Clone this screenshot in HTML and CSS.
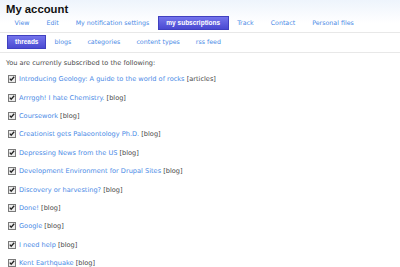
FILE: index.html
```html
<!DOCTYPE html>
<html lang="en">
<head>
  <meta charset="UTF-8">
  <title>My account</title>
  <link rel="stylesheet" href="styles.css">
</head>
<body>
  <div class="header">
    <h1>My account</h1>
    <ul class="tabs primary">
      <li><a href="#">View</a></li>
      <li><a href="#">Edit</a></li>
      <li><a href="#">My notification settings</a></li>
      <li class="active"><a href="#">my subscriptions</a></li>
      <li><a href="#">Track</a></li>
      <li><a href="#">Contact</a></li>
      <li><a href="#">Personal files</a></li>
    </ul>
  </div>
  <ul class="tabs secondary">
    <li class="active"><a href="#">threads</a></li>
    <li><a href="#">blogs</a></li>
    <li><a href="#">categories</a></li>
    <li><a href="#">content types</a></li>
    <li><a href="#">rss feed</a></li>
  </ul>

  <div class="content">
    <p class="intro">You are currently subscribed to the following:</p>
    <ul class="subs">
      <li><svg class="box" viewBox="0 0 8 8"><rect x="0.5" y="0.5" width="7" height="7" /><path d="M1.8 3.6 L3.2 5.2 L6.2 1.8" /></svg><span><a href="#">Introducing Geology: A guide to the world of rocks</a> [articles]</span></li>
      <li><svg class="box" viewBox="0 0 8 8"><rect x="0.5" y="0.5" width="7" height="7" /><path d="M1.8 3.6 L3.2 5.2 L6.2 1.8" /></svg><span><a href="#">Arrrggh! I hate Chemistry.</a> [blog]</span></li>
      <li><svg class="box" viewBox="0 0 8 8"><rect x="0.5" y="0.5" width="7" height="7" /><path d="M1.8 3.6 L3.2 5.2 L6.2 1.8" /></svg><span><a href="#">Coursework</a> [blog]</span></li>
      <li><svg class="box" viewBox="0 0 8 8"><rect x="0.5" y="0.5" width="7" height="7" /><path d="M1.8 3.6 L3.2 5.2 L6.2 1.8" /></svg><span><a href="#">Creationist gets Palaeontology Ph.D.</a> [blog]</span></li>
      <li><svg class="box" viewBox="0 0 8 8"><rect x="0.5" y="0.5" width="7" height="7" /><path d="M1.8 3.6 L3.2 5.2 L6.2 1.8" /></svg><span><a href="#">Depressing News from the US</a> [blog]</span></li>
      <li><svg class="box" viewBox="0 0 8 8"><rect x="0.5" y="0.5" width="7" height="7" /><path d="M1.8 3.6 L3.2 5.2 L6.2 1.8" /></svg><span><a href="#">Development Environment for Drupal Sites</a> [blog]</span></li>
      <li><svg class="box" viewBox="0 0 8 8"><rect x="0.5" y="0.5" width="7" height="7" /><path d="M1.8 3.6 L3.2 5.2 L6.2 1.8" /></svg><span><a href="#">Discovery or harvesting?</a> [blog]</span></li>
      <li><svg class="box" viewBox="0 0 8 8"><rect x="0.5" y="0.5" width="7" height="7" /><path d="M1.8 3.6 L3.2 5.2 L6.2 1.8" /></svg><span><a href="#">Done!</a> [blog]</span></li>
      <li><svg class="box" viewBox="0 0 8 8"><rect x="0.5" y="0.5" width="7" height="7" /><path d="M1.8 3.6 L3.2 5.2 L6.2 1.8" /></svg><span><a href="#">Google</a> [blog]</span></li>
      <li><svg class="box" viewBox="0 0 8 8"><rect x="0.5" y="0.5" width="7" height="7" /><path d="M1.8 3.6 L3.2 5.2 L6.2 1.8" /></svg><span><a href="#">I need help</a> [blog]</span></li>
      <li><svg class="box" viewBox="0 0 8 8"><rect x="0.5" y="0.5" width="7" height="7" /><path d="M1.8 3.6 L3.2 5.2 L6.2 1.8" /></svg><span><a href="#">Kent Earthquake</a> [blog]</span></li>
    </ul>
  </div>
</body>
</html>
```

FILE: styles.css
```css
body { margin: 0; font-family: "DejaVu Sans", Verdana, sans-serif; font-size: 6.6px; color: #4a4a4a; background: #fff; }
a { color: #4a8ae6; text-decoration: none; }

.header { background: linear-gradient(to bottom, #eef4fc, #fff 70%); padding: 3px 0 0 0; }
h1 { margin: 0 0 0 6px; font-family: "Liberation Sans", Arial, sans-serif; font-size: 11.3px; font-weight: bold; color: #111; line-height: 12px; }

.tabs { list-style: none; margin: 0; display: flex; white-space: nowrap; border-bottom: 1px solid #e8e8e8; font-size: 6.3px; }
.tabs li a { display: block; padding: 2px 7px; line-height: 8px; border: 1px solid transparent; }
.tabs li.active a { color: #fff; font-family: "Liberation Sans", Arial, sans-serif; font-size: 6.5px; font-weight: bold; background: linear-gradient(to bottom, #7474ec, #4a4ad2); border-color: #4040c0; }

.primary { margin-top: 1px; padding: 0 0 2px 6px; }
.primary li a { padding: 2px 7.5px; }
.secondary { padding: 2px 0 3px 7px; }

.content { padding: 0 6px; }
.intro { margin: 6px 0 3px; line-height: 8px; }
.subs { list-style: none; margin: 0; padding: 0 0 0 2px; }
.subs li { display: flex; align-items: center; height: 18.4px; }
.box { width: 8px; height: 8px; margin-right: 3px; flex: none; }
.box rect { fill: #ececec; stroke: #7a7a7a; stroke-width: 1; }
.box path { fill: none; stroke: #222; stroke-width: 1.3; }
```
